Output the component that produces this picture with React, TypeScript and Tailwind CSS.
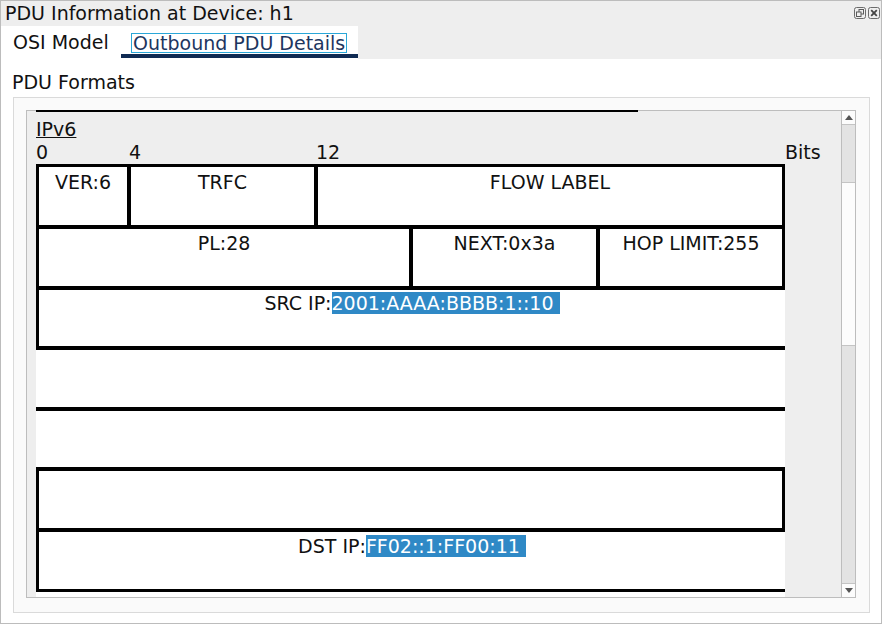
const RestoreIcon = () => (
  <svg width="12" height="12" viewBox="0 0 12 12">
    <rect x="0.5" y="0.5" width="11" height="11" rx="2" fill="none" stroke="#6b6b6b" />
    <rect x="5" y="2.5" width="4.5" height="4.5" fill="none" stroke="#5a5a5a" />
    <rect x="2.5" y="5" width="4.5" height="4.5" fill="#eeeeee" stroke="#5a5a5a" />
  </svg>
);

const CloseIcon = () => (
  <svg width="12" height="12" viewBox="0 0 12 12">
    <rect x="0.5" y="0.5" width="11" height="11" rx="2" fill="none" stroke="#6b6b6b" />
    <path d="M3.2 3.2 L8.8 8.8 M8.8 3.2 L3.2 8.8" stroke="#444" strokeWidth="1.8" />
  </svg>
);

const TitleBar = () => (
  <div className="h-[25px] bg-[#eeeeee] flex justify-between">
    <div className="pl-[4px] pt-px">PDU Information at Device: h1</div>
    <div className="flex gap-[2px] pt-[6px] pr-[1px]">
      <RestoreIcon />
      <CloseIcon />
    </div>
  </div>
);

const Tabs = () => (
  <div className="h-[33px] bg-[#eeeeee] flex">
    <div className="w-[357px] bg-white flex">
      <div className="w-[120px] pl-[12px] pt-[5px]">OSI Model</div>
      <div className="w-[237px] flex flex-col justify-between">
        <div className="pt-[6px] pl-[10px]">
          <span className="inline-block h-[20px] leading-[18px] border border-[#2aa7d8] px-px text-[#1d3660]">
            Outbound PDU Details
          </span>
        </div>
        <div className="h-[4px] mb-px bg-[#0f2b53]" />
      </div>
    </div>
  </div>
);

const Hl = ({ children }: { children: string }) => (
  <span className="bg-[#2f89c6] text-white">{children}</span>
);

const Scrollbar = () => (
  <div className="w-[14px] border-l border-[#bdbdbd] bg-[#fcfcfc] flex flex-col">
    <div className="h-[13px] flex items-center justify-center">
      <svg width="8" height="5" viewBox="0 0 8 5">
        <path d="M0 5 L4 0 L8 5 Z" fill="#555" />
      </svg>
    </div>
    <div className="h-[59px] bg-[#e3e3e3] border-y border-[#c4c4c4]" />
    <div className="h-[162px]" />
    <div className="h-[239px] bg-[#e3e3e3] border-y border-[#c4c4c4]" />
    <div className="h-[13px] flex items-center justify-center">
      <svg width="8" height="5" viewBox="0 0 8 5">
        <path d="M0 0 L8 0 L4 5 Z" fill="#555" />
      </svg>
    </div>
  </div>
);

const Grid = () => (
  <div className="w-[749px] flex-1 bg-white flex flex-col text-center">
    <div className="flex h-[65px] shrink-0">
      <div className="w-[94px] border-[3px] border-black pt-[4px]">VER:6</div>
      <div className="w-[189px] -ml-[2px] border-[3px] border-black pt-[4px]">TRFC</div>
      <div className="w-[470px] -ml-[2px] border-[3px] border-black pt-[4px]">FLOW LABEL</div>
    </div>
    <div className="flex h-[65px] shrink-0 -mt-[4px]">
      <div className="w-[376px] border-[3px] border-black pt-[4px]">PL:28</div>
      <div className="w-[189px] -ml-[2px] border-[3px] border-black pt-[4px]">NEXT:0x3a</div>
      <div className="w-[188px] -ml-[2px] border-[3px] border-black pt-[4px]">HOP LIMIT:255</div>
    </div>
    <div className="h-[64px] shrink-0 -mt-[4px] border-[3px] border-r-0 border-black pt-[3px]">
      SRC IP:<Hl>{'2001:AAAA:BBBB:1::10\u00a0'}</Hl>
    </div>
    <div className="h-[65px] shrink-0 -mt-[4px] border-y-[3px] border-black" />
    <div className="h-[64px] shrink-0 -mt-[4px] border-y-[3px] border-black" />
    <div className="h-[65px] shrink-0 -mt-[4px] border-[3px] border-black" />
    <div className="h-[64px] shrink-0 -mt-[4px] border-[3px] border-r-0 border-black pt-[4px]">
      DST IP:<Hl>{'FF02::1:FF00:11\u00a0'}</Hl>
    </div>
  </div>
);

const Panel = () => (
  <div className="ml-[12px] w-[857px] h-[516px] border border-[#dadada] bg-[#fafafa] pt-[12px] pl-[12px]">
    <div className="relative w-[830px] h-[488px] border border-[#bdbdbd] flex">
      <div className="absolute left-[9px] -top-px w-[602px] h-[2px] bg-black" />
      <div className="flex-1 bg-[#eeeeee] pl-[9px] pt-[7px] flex flex-col overflow-hidden">
        <div className="h-[23px] leading-[23px] shrink-0">
          <span className="underline">IPv6</span>
        </div>
        <div className="h-[23px] leading-[23px] shrink-0 flex">
          <span className="w-[93px]">0</span>
          <span className="w-[187px]">4</span>
          <span className="w-[469px]">12</span>
          <span>Bits</span>
        </div>
        <Grid />
      </div>
      <Scrollbar />
    </div>
  </div>
);

export default function App() {
  return (
    <div className="w-[882px] h-[624px] border border-[#bcbcbc] bg-white flex flex-col overflow-hidden font-['DejaVu_Sans',sans-serif] text-[19px] leading-[22px] text-[#111]">
      <TitleBar />
      <Tabs />
      <div className="h-[38px] pl-[11px] pt-[12px]">PDU Formats</div>
      <Panel />
    </div>
  );
}
